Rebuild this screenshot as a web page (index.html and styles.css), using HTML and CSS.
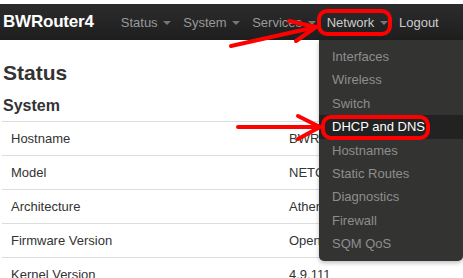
FILE: index.html
```html
<!DOCTYPE html>
<html lang="en">

<head>
    <meta charset="UTF-8">
    <meta name="viewport" content="width=device-width, initial-scale=1.0">
    <title>BWRouter4 - Status</title>
    <link rel="stylesheet" href="styles.css">
</head>

<body>
    <div class="navbar">
        <a class="brand">BWRouter4</a>
        <ul class="nav">
            <li class="status">Status <b class="caret"></b></li>
            <li class="system">System <b class="caret"></b></li>
            <li class="services">Services <b class="caret"></b></li>
            <li class="network">Network <b class="caret"></b>
                <ul class="dropdown">
                    <li>Interfaces</li>
                    <li>Wireless</li>
                    <li>Switch</li>
                    <li class="active">DHCP and DNS</li>
                    <li>Hostnames</li>
                    <li>Static Routes</li>
                    <li>Diagnostics</li>
                    <li>Firewall</li>
                    <li>SQM QoS</li>
                </ul>
            </li>
            <li class="logout">Logout</li>
        </ul>
    </div>

    <div class="content">
        <h2>Status</h2>
        <h3>System</h3>
        <table class="info">
            <tr><td class="label">Hostname</td><td>BWRouter4</td></tr>
            <tr><td class="label">Model</td><td>NETGEAR</td></tr>
            <tr><td class="label">Architecture</td><td>Atheros</td></tr>
            <tr><td class="label">Firmware Version</td><td>OpenWrt</td></tr>
            <tr><td class="label">Kernel Version</td><td>4.9.111</td></tr>
        </table>
    </div>

    <!-- annotation marks drawn on top of the screenshot -->
    <svg class="marks" width="463" height="278" viewBox="0 0 463 278">
        <g fill="none" stroke="#f00" stroke-width="4" stroke-linecap="round" stroke-linejoin="round">
            <rect x="319" y="11" width="71" height="23" rx="8" />
            <rect x="323" y="117" width="105" height="21" rx="8" />
            <path d="M231 46 L316 27" />
            <path d="M289 21 L316 27 L296 41" />
            <path d="M238 127 L319 127" />
            <path d="M298 116 L320 127 L298 139" />
        </g>
    </svg>
</body>

</html>
```
FILE: styles.css
```css
body {
    margin: 0;
    padding-top: 4px;
    font-family: "Liberation Sans", Arial, sans-serif;
    font-size: 13px;
    color: #333;
    background: #fff;
}

.navbar {
    position: relative;
    display: flex;
    align-items: center;
    height: 36px;
    background: linear-gradient(#2c2c2c, #1e1e1e);
}

.brand {
    padding-left: 3px;
    font-size: 17px;
    font-weight: bold;
    color: #fff;
    letter-spacing: -0.2px;
}

.nav {
    display: flex;
    margin: 0;
    padding: 0;
    list-style: none;
}

.nav>li {
    color: #999;
    white-space: nowrap;
}

.status {
    margin-left: 27px;
}

.system {
    margin-left: 12px;
}

.services {
    margin-left: 12px;
}

.network {
    margin-left: 11px;
}

.logout {
    margin-left: 11px;
}

.nav>li.network,
.nav>li.logout {
    color: #ccc;
}

.caret {
    display: inline-block;
    margin-left: 2px;
    vertical-align: middle;
    border-top: 4px solid #777;
    border-left: 4px solid transparent;
    border-right: 4px solid transparent;
}

.dropdown {
    position: absolute;
    left: 319px;
    top: 36px;
    width: 144px;
    margin: 0;
    padding: 5px 0;
    list-style: none;
    background: #333432;
    border-radius: 0 0 5px 5px;
    box-shadow: 0 2px 4px rgba(0, 0, 0, 0.25);
}

.dropdown li {
    height: 23.4px;
    line-height: 23.4px;
    padding-left: 13px;
    font-size: 13px;
    color: #8e8e8e;
}

.dropdown li.active {
    background: #222;
    color: #fff;
}

.content {
    padding: 0 3px 0 2px;
}

h2 {
    margin: 21px 0 0 1px;
    font-size: 21px;
    line-height: 24px;
    color: #333;
}

h3 {
    margin: 11px 0 0 1px;
    font-size: 16px;
    line-height: 20px;
    color: #333;
}

.info {
    width: 100%;
    margin-top: 5px;
    border-collapse: collapse;
}

.info td {
    height: 33px;
    padding: 0;
    border-top: 1px solid #ddd;
    color: #333;
}

.info td.label {
    width: 278px;
    padding-left: 9px;
}

.marks {
    position: absolute;
    left: 0;
    top: 0;
}
```
